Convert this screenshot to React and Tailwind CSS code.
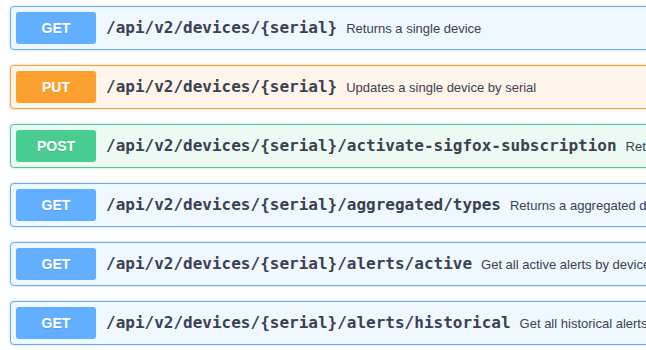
const ops = [
  { method: "GET", path: "/api/v2/devices/{serial}", desc: "Returns a single device" },
  { method: "PUT", path: "/api/v2/devices/{serial}", desc: "Updates a single device by serial" },
  { method: "POST", path: "/api/v2/devices/{serial}/activate-sigfox-subscription", desc: "Returns the device with an activated sigfox subscription" },
  { method: "GET", path: "/api/v2/devices/{serial}/aggregated/types", desc: "Returns a aggregated data types of the device" },
  { method: "GET", path: "/api/v2/devices/{serial}/alerts/active", desc: "Get all active alerts by device serial" },
  { method: "GET", path: "/api/v2/devices/{serial}/alerts/historical", desc: "Get all historical alerts by device serial" },
]

const styles = {
  GET: { block: "border-[#61affe] bg-[#eff7ff]", badge: "bg-[#61affe]" },
  PUT: { block: "border-[#fca130] bg-[#fff5ea]", badge: "bg-[#fca130]" },
  POST: { block: "border-[#49cc90] bg-[#edfaf4]", badge: "bg-[#49cc90]" },
}

function OpBlock({ method, path, desc }) {
  const s = styles[method]
  return (
    <div className={`w-[900px] shrink-0 rounded border shadow-[0_0_3px_rgba(0,0,0,0.19)] ${s.block}`}>
      <div className="flex items-center p-[5px]">
        <span
          className={`flex h-[32px] w-[80px] shrink-0 items-center justify-center rounded-[3px] pt-px text-[14px] font-bold text-white [text-shadow:0_1px_0_rgba(0,0,0,0.1)] ${s.badge}`}
          style={{ fontFamily: '"Liberation Sans", Arial, sans-serif' }}
        >
          {method}
        </span>
        <span
          className="shrink-0 whitespace-nowrap pl-[10px] pr-[9px] text-[16px] font-bold text-[#3b4151]"
          style={{ fontFamily: '"DejaVu Sans Mono", monospace' }}
        >
          {path}
        </span>
        <span
          className="whitespace-nowrap pt-px text-[13px] text-[#3b4151]"
          style={{ fontFamily: '"Liberation Sans", Arial, sans-serif' }}
        >
          {desc}
        </span>
      </div>
    </div>
  )
}

export default function App() {
  return (
    <div className="h-[350px] w-[646px] overflow-hidden bg-white">
      <div className="flex flex-col gap-[15px] pl-[10px] pt-[6px]">
        {ops.map((op, i) => (
          <OpBlock key={i} {...op} />
        ))}
      </div>
    </div>
  )
}
